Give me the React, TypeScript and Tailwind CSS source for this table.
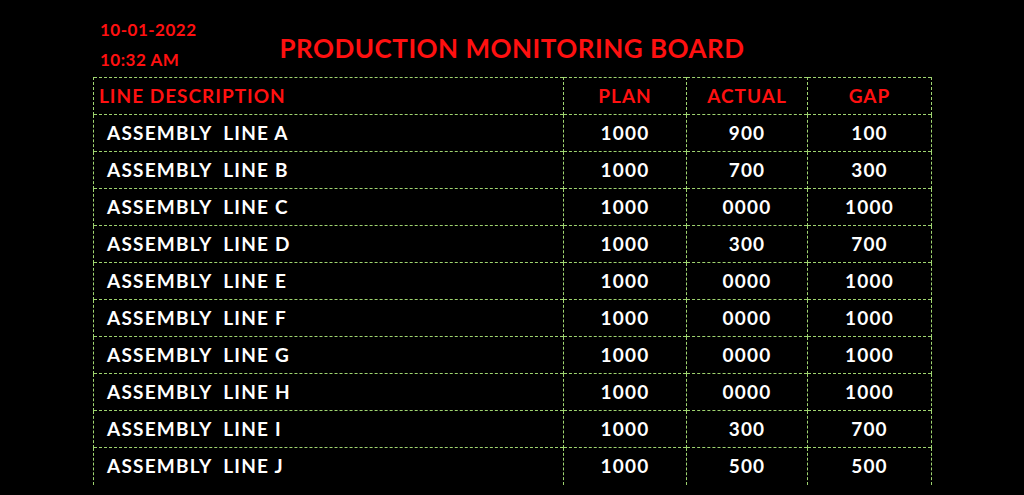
const rows = [
  { name: 'ASSEMBLY  LINE A', plan: '1000', actual: '900', gap: '100' },
  { name: 'ASSEMBLY  LINE B', plan: '1000', actual: '700', gap: '300' },
  { name: 'ASSEMBLY  LINE C', plan: '1000', actual: '0000', gap: '1000' },
  { name: 'ASSEMBLY  LINE D', plan: '1000', actual: '300', gap: '700' },
  { name: 'ASSEMBLY  LINE E', plan: '1000', actual: '0000', gap: '1000' },
  { name: 'ASSEMBLY  LINE F', plan: '1000', actual: '0000', gap: '1000' },
  { name: 'ASSEMBLY  LINE G', plan: '1000', actual: '0000', gap: '1000' },
  { name: 'ASSEMBLY  LINE H', plan: '1000', actual: '0000', gap: '1000' },
  { name: 'ASSEMBLY  LINE I', plan: '1000', actual: '300', gap: '700' },
  { name: 'ASSEMBLY  LINE J', plan: '1000', actual: '500', gap: '500' },
]

const cellBorder = 'border-l border-dashed border-[#9fd470]'

const App = () => {
  return (
    <div className="w-full h-[495px] bg-black overflow-hidden font-['Lato',sans-serif] font-bold">
      {/* Header */}
      <div className="h-[77px] px-[100px] grid grid-cols-[1fr_auto_1fr] items-start">
        <div className="pt-[15px] text-[#ff1010] text-[17px] leading-[30px] tracking-[0.5px]">
          <div>10-01-2022</div>
          <div>10:32 AM</div>
        </div>
        <h1 className="pt-[30px] text-[#ff1010] text-[26px] leading-[36px] tracking-[0.5px] whitespace-nowrap">
          PRODUCTION MONITORING BOARD
        </h1>
        <div />
      </div>

      {/* Table */}
      <table className="ml-[93px] w-[838px] border-collapse table-fixed text-[19px] tracking-[1.2px]">
        <colgroup>
          <col className="w-[470px]" />
          <col className="w-[123px]" />
          <col className="w-[121px]" />
          <col className="w-[124px]" />
        </colgroup>
        <thead>
          <tr className="h-[37px] text-[#ff1010] border-t border-dashed border-[#9fd470]">
            <th className={`${cellBorder} text-left pl-[5px] font-bold tracking-[1px]`}>LINE DESCRIPTION</th>
            <th className={`${cellBorder} font-bold tracking-[1px]`}>PLAN</th>
            <th className={`${cellBorder} font-bold tracking-[1px]`}>ACTUAL</th>
            <th className={`${cellBorder} border-r font-bold tracking-[1px]`}>GAP</th>
          </tr>
        </thead>
        <tbody className="text-white">
          {rows.map((r) => (
            <tr key={r.name} className="h-[37px] border-t border-dashed border-[#9fd470]">
              <td className={`${cellBorder} pl-[13px] whitespace-pre`}>{r.name}</td>
              <td className={`${cellBorder} text-center`}>{r.plan}</td>
              <td className={`${cellBorder} text-center`}>{r.actual}</td>
              <td className={`${cellBorder} border-r text-center`}>{r.gap}</td>
            </tr>
          ))}
        </tbody>
      </table>
    </div>
  )
}

export default App
